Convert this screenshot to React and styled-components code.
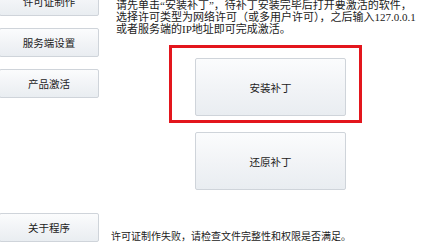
import styled, { createGlobalStyle } from "styled-components";

const Global = createGlobalStyle`
html, body {
    margin: 0;
    padding: 0;
    background: #fff;
}
body {
    font-family: "Liberation Serif", "Noto Sans CJK SC", serif;
    color: #222;
}
`

const App = () => {
    return (
        <Wrapper>
            <Global />
            <SideMenu>
                <MenuButton>许可证制作</MenuButton>
                <MenuButton>服务端设置</MenuButton>
                <MenuButton>产品激活</MenuButton>
                <MenuButton $bottom>关于程序</MenuButton>
            </SideMenu>
            <Content>
                <Hint>
                    请先单击“安装补丁”，待补丁安装完毕后打开要激活的软件，<br />
                    选择许可类型为网络许可（或多用户许可），之后输入127.0.0.1<br />
                    或者服务端的IP地址即可完成激活。
                </Hint>
                <Actions>
                    <Highlighted>
                        <PatchButton>安装补丁</PatchButton>
                        <RedMark />
                    </Highlighted>
                    <PatchButton>还原补丁</PatchButton>
                </Actions>
                <Status>许可证制作失败，请检查文件完整性和权限是否满足。</Status>
            </Content>
        </Wrapper>
    )
}

const Wrapper = styled.div`
display: flex;
width: 421px;
height: 246px;
overflow: hidden;
background: #fff;
`

const SideMenu = styled.div`
display: flex;
flex-direction: column;
gap: 12px;
width: 100px;
height: 255px;
margin: -13px 0 0 -1px;
flex-shrink: 0;
`

const buttonLook = `
box-sizing: border-box;
display: flex;
align-items: center;
justify-content: center;
border: 1px solid #cfd4da;
border-radius: 2px;
background: linear-gradient(180deg, #fbfcfd 0%, #f1f3f6 55%, #e9edf1 100%);
font-family: "Noto Sans CJK SC", sans-serif;
font-size: 10.5px;
color: #222;
`

const MenuButton = styled.div`
${buttonLook}
height: 29px;
width: 100px;
margin-top: ${p => p.$bottom ? 'auto' : '0'};
`

const Content = styled.div`
flex: 1;
display: flex;
flex-direction: column;
padding-left: 12px;
`

const Hint = styled.div`
margin: -1px 0 0 5px;
font-size: 11px;
line-height: 12px;
white-space: nowrap;
`

const Actions = styled.div`
display: flex;
flex-direction: column;
gap: 16px;
margin: 23px 0 0 84px;
`

const Highlighted = styled.div`
position: relative;
`

const PatchButton = styled.div`
${buttonLook}
width: 151px;
height: 58px;
`

const RedMark = styled.div`
position: absolute;
left: -26px;
top: -13px;
width: 193px;
height: 78px;
box-sizing: border-box;
border: 3px solid #e3161d;
pointer-events: none;
`

const Status = styled.div`
margin-top: auto;
margin-bottom: 4px;
font-family: "Noto Sans CJK SC", sans-serif;
font-size: 10px;
line-height: 12px;
white-space: nowrap;
`

export default App
